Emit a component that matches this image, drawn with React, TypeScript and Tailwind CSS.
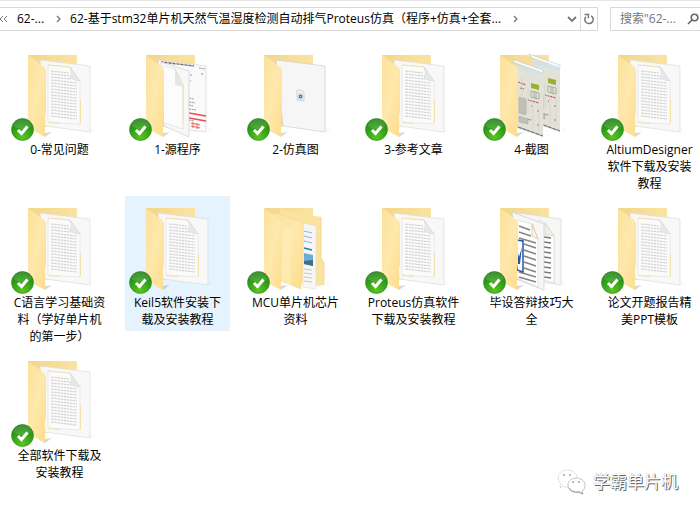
import { type ReactNode, useState } from 'react'

type Preview = 'document' | 'source' | 'simulation' | 'screenshots' | 'nested' | 'word'

interface Folder {
  name: string
  preview: Preview
}

const folders: Folder[] = [
  { name: '0-常见问题', preview: 'document' },
  { name: '1-源程序', preview: 'source' },
  { name: '2-仿真图', preview: 'simulation' },
  { name: '3-参考文章', preview: 'document' },
  { name: '4-截图', preview: 'screenshots' },
  { name: 'AltiumDesigner软件下载及安装教程', preview: 'document' },
  { name: 'C语言学习基础资料（学好单片机的第一步）', preview: 'document' },
  { name: 'Keil5软件安装下载及安装教程', preview: 'document' },
  { name: 'MCU单片机芯片资料', preview: 'nested' },
  { name: 'Proteus仿真软件下载及安装教程', preview: 'document' },
  { name: '毕设答辩技巧大全', preview: 'word' },
  { name: '论文开题报告精美PPT模板', preview: 'document' },
  { name: '全部软件下载及安装教程', preview: 'document' }
]

function DocumentPreview () {
  return (
    <g>
      <path d="M33 17 83 23V89L38 83Z" fill="#f8f8f8" stroke="#dcdcdc" strokeWidth=".7" />
      <path d="M41 22 63 24 73 38V81L41 79Z" fill="#fbfbfb" stroke="#e2e2e2" strokeWidth=".7" />
      <path d="M44 28 62 30M44 31 63 33M44 34 64 36M44 37 70 40M44 40 70 43M44 43 70 46M44 46 70 49M44 49 70 52M44 52 70 55M44 55 70 58M44 58 70 61M44 61 70 64M44 64 70 67M44 67 70 70M44 70 70 73M44 73 70 76" stroke="#d3d3d3" strokeWidth="1.200" strokeDasharray="3 .7 2 .6" fill="none" />
      <path d="M63 24Q66 30 63 35Q68 38 73 38Z" fill="#e8e8e8" stroke="#cfcfcf" strokeWidth=".5" />
      <path d="M41 22 63 24M73.500 57V80M41 79.500 53 80.500" stroke="#f5dfa5" strokeWidth=".9" fill="none" />
    </g>
  )
}

function SourcePreview () {
  return (
    <g>
      <path d="M33 17 81 23V89L40 84Z" fill="#fafafa" stroke="#d4d4d4" strokeWidth=".7" />
      <path d="M36 19 69 23" stroke="#666" strokeWidth="1.400" strokeDasharray="2 .6 1 .4" />
      <path d="M74 25 80 26M76 31H79M65 32H67M65 38H66M64 55 69 56M64 59 70 60M64 62 68 63M64 66 71 67M64 77 69 78" stroke="#999" strokeDasharray="2 .7" />
      <path d="M64 70 81 73M64 75 81 78" stroke="#f34b50" strokeWidth="1.400" />
      <path d="M66 80 75 82M66 83 75 85M68 79V85M72 80V86" stroke="#ee6666" strokeWidth="1" />
      <path d="M36 19 64 28V94L39 83Z" fill="#f8f8f8" stroke="#d0d0d0" strokeWidth=".7" />
      <path d="M39 23 50 26 58 41V86L39 80" fill="#fcfcfc" stroke="#ddd" strokeWidth=".7" />
      <path d="M50 26V42L58 44Z" fill="#e5e5e5" />
      <path d="M50 26 58 42V80" fill="none" stroke="#eed8a2" strokeWidth=".7" />
    </g>
  )
}

function SimulationPreview () {
  return (
    <g>
      <path d="M33 17 82 23V89L40 83Z" fill="#f6f6f6" stroke="#d3d3d3" strokeWidth=".8" />
      <path d="M54 47H58L61 49V58L54 57Z" fill="#f5f2ea" stroke="#c4c4c4" strokeWidth=".7" />
      <path d="M55 50H60V57H55Z" fill="#dde5ec" />
      <circle cx="57.500" cy="53.500" r="1.300" fill="#bad0e6" stroke="#48719b" strokeWidth="1.200" />
    </g>
  )
}

function Schematic () {
  return (
    <g>
      <path d="M36 22 64 30V94L38 85Z" fill="#e3e2d8" />
      <path d="M33 16 64 27V30L36 20Z" fill="#f8fafb" stroke="#b6c5cd" strokeWidth=".5" />
      <path d="M36 22 64 30V33L38 26Z" fill="#cfe3ec" />
      <path d="M52 40 60 42V47L52 45Z" fill="#9bb02c" />
      <path d="M52 48 60 50V56L52 54ZM55 48V55M57 49V56" fill="none" stroke="#9fac98" strokeWidth=".9" />
      <path d="M39 39 47 42M41 45 45 46M49 57 60 60M52 63H53M58 68H60M48 76 52 77M58 82H60" stroke="#bd5f5f" strokeWidth="1.200" strokeDasharray="2 .7" />
      <path d="M40 54 47 56V72L40 70ZM40 73 49 76V81L40 79Z" fill="#c0c0b4" stroke="#a2a99f" strokeWidth=".5" />
      <path d="M43 34V53M49 45V70M54 60V86M60 62V88" stroke="#c3cec6" strokeWidth=".5" />
      <path d="M39 84 64 93" stroke="#657984" strokeWidth="1.200" strokeDasharray="4 .6" />
    </g>
  )
}

function ScreenshotsPreview () {
  return (
    <g>
      <g transform="translate(17 -5)"><Schematic /></g>
      <Schematic />
    </g>
  )
}

function WordPreview () {
  return (
    <g>
      <path d="M33 16 82 23V89L63 86Z" fill="#f6f6f6" stroke="#d5d5d5" strokeWidth=".7" />
      <path d="M60 24 66 27 75 40V87L62 83Z" fill="#fff" stroke="#ccc" strokeWidth=".6" />
      <path d="M65 41 72 42M65 46 72 47M65 51 72 52M65 56 72 57M65 61 72 62M65 66 72 67M65 71 72 72M65 76 72 77M65 81 72 82" stroke="#777" strokeWidth="1.500" />
      <path d="M66 27V39L75 40Z" fill="#eee" stroke="#d8c79d" strokeWidth=".5" />
      <path d="M33 16 65 28V94L39 84Z" fill="#f7f7f7" stroke="#ccc" strokeWidth=".7" />
      <path d="M38 24 53 28 59 43V91L38 82Z" fill="#fff" stroke="#ccc" strokeWidth=".5" />
      <path d="M40 30 51 34M40 36 52 40M40 42 57 47M45 48 57 52M45 54 57 58M45 60 57 64M45 66 57 70M45 72 57 76M40 76 57 81M40 81 57 86" stroke="#858585" strokeWidth="1.600" />
      <path d="M38 44 44 45V76L38 74Z" fill="#fff" stroke="#2856a0" strokeWidth="1.500" />
      <path d="M38 53 40 61 43 51 41 68 38 68Z" fill="#2856a0" />
      <path d="M53 28V40L59 43Z" fill="#f3f3f3" stroke="#dabf86" strokeWidth=".7" />
    </g>
  )
}

function NestedPreview () {
  return (
    <g>
      <path d="M37 13 78 21V62L81 67V89L74 90 38 84Z" fill="#fae29f" />
      <path d="M78 21V62L81 67V89" stroke="#ecd083" strokeWidth=".7" />
      <path d="M60 27 73 30V93L60 91Z" fill="#f6f6f6" stroke="#d8d8d8" strokeWidth=".5" />
      <path d="M61 35 69 37M61 40 69 42M61 45 69 47" stroke="#82bcd7" />
      <path d="M61 52 69 54" stroke="#1285bb" strokeWidth="1.600" />
      <path d="M61 57 70 59V70L61 68Z" fill="#6badd6" />
      <path d="M61 65 70 64V70L61 68Z" fill="#426c80" />
      <path d="M61 73 69 74M61 77 69 78M61 81 69 82M61 85 69 86" stroke="#bbb" strokeWidth=".8" />
      <path d="M30 16 60 26V67L58 71V93L38 85Z" fill="url(#folder-front)" stroke="#eed18a" strokeWidth=".5" />
      <path d="M39 30 48 31V90L39 85Z" fill="#fff0ba" opacity=".5" />
    </g>
  )
}

const previews: Record<Preview, ReactNode> = {
  document: <DocumentPreview />,
  source: <SourcePreview />,
  simulation: <SimulationPreview />,
  screenshots: <ScreenshotsPreview />,
  nested: <NestedPreview />,
  word: <WordPreview />
}

function FolderIcon ({ preview }: { preview: Preview }) {
  return (
    <svg viewBox="0 0 105 98" className="block h-[98px] w-[105px]" fill="none" aria-hidden="true">
      <defs>
        <linearGradient id="folder-front" x1="0" y1="0" x2="1" y2="1">
          <stop stopColor="#fae19c" />
          <stop offset=".5" stopColor="#ffe8ac" />
          <stop offset="1" stopColor="#fcdd8c" />
        </linearGradient>
        <linearGradient id="folder-back" x1="0" y1="0" x2="1" y2="0">
          <stop stopColor="#f3d687" />
          <stop offset="1" stopColor="#fae3a3" />
        </linearGradient>
        <linearGradient id="shade">
          <stop stopColor="#999" stopOpacity=".4" />
          <stop offset="1" stopColor="#999" stopOpacity="0" />
        </linearGradient>
        <radialGradient id="badge" cx=".5" cy=".85" r=".85">
          <stop stopColor="#5cc51e" />
          <stop offset=".6" stopColor="#2f9d18" />
          <stop offset="1" stopColor="#227d1b" />
        </radialGradient>
      </defs>
      <path d="M83 85 91 86 83 90ZM38 90 45 89 38 94Z" fill="url(#shade)" />
      <path d="M21 12H70V75L38 84 21 80Z" fill="url(#folder-back)" />
      {previews[preview]}
      <path d="M21 12 36 23Q39 25 39 29V69L38 72V94L21 85Z" fill="url(#folder-front)" />
      <circle cx="15.500" cy="86.500" r="11" fill="url(#badge)" stroke="#2c8c1d" strokeWidth=".6" />
      <path d="M6 83A10 10 0 0 1 25 83Q16 89 6 83" fill="#fff" opacity=".12" />
      <path d="m11 87 3.500 3.500 6-7" stroke="#fff" strokeWidth="3" />
    </svg>
  )
}

function Chevron ({ className }: { className: string }) {
  return (
    <svg viewBox="0 0 5 8" className={`h-2 w-[5px] shrink-0 ${className}`} fill="none" stroke="#777" strokeWidth="1.300" aria-hidden="true">
      <path d="m1 1 3 3-3 3" />
    </svg>
  )
}

function AddressBar () {
  return (
    <header className="flex h-[31px] items-end border-t border-[#e6e6e6] text-[12px]">
      <nav aria-label="地址" className="flex h-6 min-w-0 flex-1 items-center border-y border-[#d9d9d9]">
        <svg viewBox="0 0 8 8" className="h-2 w-2 shrink-0" fill="none" stroke="#777" aria-hidden="true">
          <path d="M3 1 0 4l3 3M7 1 4 4l3 3" />
        </svg>
        <button className="ml-[9px] shrink-0">62-...</button>
        <Chevron className="ml-3" />
        <button className="ml-[9px] truncate">62-基于stm32单片机天然气温湿度检测自动排气Proteus仿真（程序+仿真+全套...</button>
        <Chevron className="ml-3" />
        <button aria-label="历史记录" className="ml-auto flex h-full w-[16px] shrink-0 items-center justify-center">
          <svg viewBox="0 0 10 8" className="h-2 w-[10px]" fill="none" stroke="#777" strokeWidth="1.800" aria-hidden="true">
            <path d="m1 2 4 4 4-4" />
          </svg>
        </button>
        <button aria-label="刷新" className="flex h-full w-[18px] shrink-0 items-center justify-center border-x border-[#d9d9d9]">
          <svg viewBox="0 0 12 12" className="h-3 w-3" fill="none" stroke="#777" strokeWidth="1.500" aria-hidden="true">
            <path d="M8.200 2.800a4.200 4.200 0 1 1-5.400.900M1.500 1.600h3.900v3.600" />
          </svg>
        </button>
      </nav>
      <form className="ml-3 flex h-6 w-[90px] shrink-0 items-center border-y border-l border-[#d9d9d9]" onSubmit={event => { event.preventDefault() }}>
        <input aria-label="搜索" placeholder={'搜索"62-...'} className="ml-[9px] min-w-0 flex-1 bg-transparent outline-none placeholder:text-[#767676]" />
        <button aria-label="开始搜索" className="mr-px shrink-0">
          <svg viewBox="0 0 12 12" className="block h-3 w-3" fill="none" stroke="#666" strokeWidth="1.600" aria-hidden="true">
            <circle cx="7.500" cy="4.500" r="3.300" />
            <path d="m5 7-4 4" />
          </svg>
        </button>
      </form>
    </header>
  )
}

function Watermark () {
  return (
    <div className="absolute right-[22px] bottom-[18px] flex items-center gap-[6px]">
      <svg viewBox="0 0 30 26" className="h-[26px] w-[30px]" fill="#fff" stroke="#aaa" strokeWidth=".7" aria-hidden="true">
        <path d="M11 18Q8 19 6 17L3 19 4 15C-2 9 3 1 10 1c6 0 10 4 10 8" strokeDasharray="1 1" />
        <path d="M19 9c5 0 9 3 9 7 0 3-1 5-3 6l1 3-4-2c-6 1-11-2-11-7 0-4 4-7 8-7Z" />
        <path d="M12 19q3 5 10 4l4 2" fill="none" stroke="#777" />
        <path d="M6 6h2M12 6h2M15 13h2M21 13h2" stroke="#777" strokeWidth="1.200" />
      </svg>
      <span className="text-[17px] leading-6 text-white [text-shadow:1px_1px_0_#666,0_0_1px_#888]">学霸单片机</span>
    </div>
  )
}

export default function App () {
  const [selected, setSelected] = useState('Keil5软件安装下载及安装教程')

  return (
    <div className="relative min-h-screen overflow-hidden bg-white font-['Open_Sans','Noto_Sans_CJK_SC',sans-serif] text-black">
      <AddressBar />
      <main className="-mr-2 grid grid-cols-[repeat(auto-fill,105px)] items-start gap-x-[13px] gap-y-px pt-3 pl-[7px]">
        {folders.map(({ name, preview }) => (
          <button
            key={name}
            onClick={() => { setSelected(name) }}
            className={`block pb-[3px] text-center text-[12px] leading-[17px] ${name === selected ? 'bg-[#e5f3ff]' : ''}`}
          >
            <FolderIcon preview={preview} />
            <span className="block px-[5px]">{name}</span>
          </button>
        ))}
      </main>
      <Watermark />
    </div>
  )
}
